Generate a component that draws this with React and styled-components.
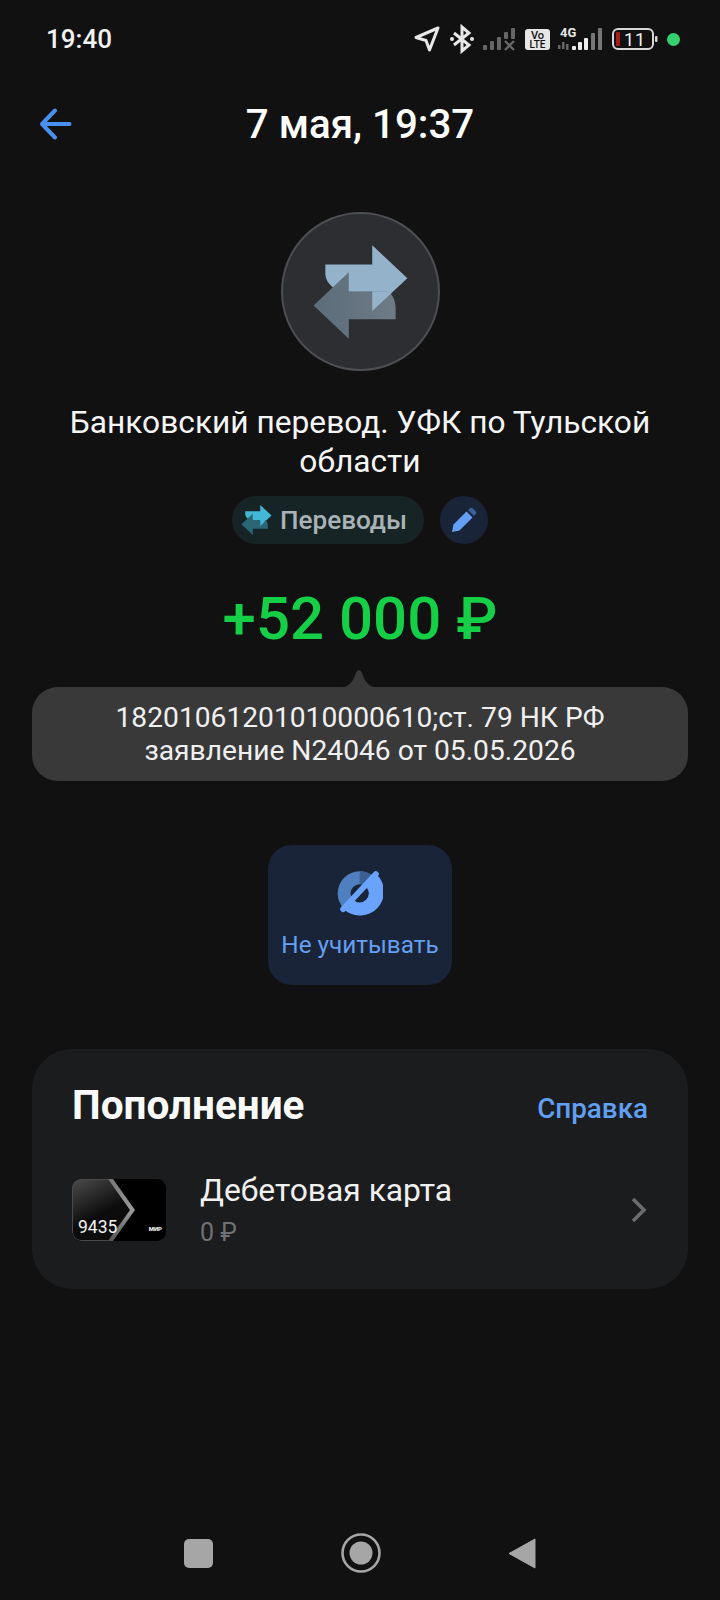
import React from 'react';
import styled, { createGlobalStyle } from 'styled-components';

const GlobalStyle = createGlobalStyle`
  html, body {
    margin: 0;
    padding: 0;
    background: #111112;
  }
  * {
    box-sizing: border-box;
  }
`;

const Page = styled.div`
  width: 720px;
  height: 1600px;
  overflow: hidden;
  display: flex;
  flex-direction: column;
  align-items: center;
  background: #111112;
  font-family: Roboto, "Liberation Sans", sans-serif;
  color: #fff;
`;

const StatusBar = styled.div`
  width: 100%;
  height: 78px;
  display: flex;
  align-items: center;
  justify-content: space-between;
  padding: 0 40px 0 46px;
`;

const Clock = styled.div`
  font-size: 26px;
  font-weight: 500;
  color: #f2f2f2;
`;

const StatusIcons = styled.div`
  display: flex;
  align-items: center;
  gap: 8px;
`;

const Dot = styled.div`
  width: 13px;
  height: 13px;
  margin-left: 1px;
  border-radius: 50%;
  background: #35d170;
`;

const Header = styled.div`
  width: 100%;
  height: 88px;
  padding-top: 4px;
  display: flex;
  align-items: center;
  justify-content: center;
  position: relative;
`;

const BackButton = styled.div`
  position: absolute;
  left: 37px;
  top: 28px;
  width: 36px;
  height: 36px;
`;

const HeaderTitle = styled.div`
  font-size: 40.300px;
  font-weight: 500;
  color: #fff;
`;

const Avatar = styled.div`
  width: 159px;
  height: 159px;
  margin-top: 46px;
  border-radius: 50%;
  background: #2c2e32;
  border: 2px solid #4c4e52;
  overflow: hidden;
`;

const Title = styled.div`
  width: 640px;
  margin-top: 32px;
  font-size: 31.700px;
  line-height: 39px;
  text-align: center;
  color: #f5f5f5;
`;

const TagRow = styled.div`
  display: flex;
  gap: 16px;
  margin-top: 15px;
`;

const Tag = styled.div`
  height: 48px;
  width: 192px;
  padding-left: 9px;
  display: flex;
  align-items: center;
  gap: 8px;
  border-radius: 24px;
  background: #172426;
  color: #a9b3b5;
  font-size: 26.100px;
  font-weight: 500;
`;

const EditButton = styled.div`
  width: 48px;
  height: 48px;
  border-radius: 50%;
  background: #1a2438;
  display: flex;
  align-items: center;
  justify-content: center;
`;

const Amount = styled.div`
  margin-top: 40px;
  font-size: 60px;
  line-height: 70px;
  font-weight: 500;
  color: #15cf46;
`;

const Tooltip = styled.div`
  position: relative;
  width: 656px;
  height: 94px;
  margin-top: 33px;
  padding: 14px 0 0;
  border-radius: 26px;
  background: #393939;
  text-align: center;
  font-size: 28.200px;
  line-height: 33px;
  color: #f0f0f0;

  &::before {
    content: '';
    position: absolute;
    left: 305px;
    top: -17px;
    width: 44px;
    height: 18px;
    background: #393939;
    clip-path: path('M0 18C10 18 14 14 17 8C19 3 20 0 22 0C24 0 25 3 27 8C30 14 34 18 44 18Z');
  }
`;

const IgnoreButton = styled.div`
  width: 184px;
  height: 140px;
  margin-top: 64px;
  padding-top: 25px;
  border-radius: 24px;
  background: #1a2438;
  display: flex;
  flex-direction: column;
  align-items: center;
  color: #659ff0;
  font-size: 24.300px;
`;

const IgnoreLabel = styled.div`
  margin-top: 14px;
`;

const Card = styled.div`
  width: 656px;
  height: 240px;
  margin-top: 64px;
  padding: 32px 40px 0;
  border-radius: 40px;
  background: #1b1c1e;
`;

const CardHead = styled.div`
  display: flex;
  align-items: center;
  justify-content: space-between;
  height: 48px;
`;

const CardTitle = styled.div`
  font-size: 40.500px;
  font-weight: 700;
  color: #fafafa;
`;

const HelpLink = styled.div`
  font-size: 27.800px;
  font-weight: 500;
  color: #619ff2;
  margin-top: 6px;
`;

const Account = styled.div`
  display: flex;
  align-items: center;
  margin-top: 42px;
`;

const CardThumb = styled.div`
  position: relative;
  width: 94px;
  height: 62px;
  border-radius: 9px;
  background: #000;
  overflow: hidden;
`;

const ThumbNumber = styled.div`
  position: absolute;
  left: 6px;
  bottom: 4px;
  font-size: 17.500px;
  color: #f2f2f2;
`;

const ThumbBrand = styled.div`
  position: absolute;
  right: 4px;
  bottom: 9px;
  font-size: 6px;
  font-weight: 900;
  color: #eee;
`;

const AccountInfo = styled.div`
  flex: 1;
  margin-left: 34px;
`;

const AccountName = styled.div`
  font-size: 31.800px;
  line-height: 38px;
  color: #f0f0f0;
`;

const AccountSum = styled.div`
  margin-top: 9px;
  font-size: 25px;
  line-height: 30px;
  color: #6f7175;
`;

const NavBar = styled.div`
  margin-top: auto;
  width: 100%;
  height: 94px;
  display: flex;
  align-items: center;
  justify-content: space-between;
  padding: 0 184px;
`;

const NavSquare = styled.div`
  width: 29px;
  height: 29px;
  border-radius: 5px;
  background: #a6a6a6;
`;

const TransferIcon = ({ light, dark, width, height }) => (
  <svg width={width} height={height} viewBox="156 133 288 287">
    <path d="M192 192H336V133L444 234L336 335V276H264L215 262C200 250 192 235 192 220Z" fill={light} />
    <path d="M264 216V276H385C400 285 408 305 408 330V360H264V420L156 318Z" fill={dark} />
    <path d="M264 276H336V335L372 301L385 276Z" fill={light} />
  </svg>
);

const AvatarIcon = () => (
  <svg width="155" height="155" viewBox="62 37 476 476">
    <defs>
      <linearGradient id="avatarDark" x1="156" y1="0" x2="408" y2="0" gradientUnits="userSpaceOnUse">
        <stop offset="0" stopColor="#5c6c79" />
        <stop offset="1" stopColor="#6e7b87" />
      </linearGradient>
    </defs>
    <path d="M192 192H336V133L444 234L336 335V276H264L215 262C200 250 192 235 192 220Z" fill="#94b2c9" />
    <path d="M264 216V276H385C400 285 408 305 408 330V360H264V420L156 318Z" fill="url(#avatarDark)" />
    <path d="M264 276H336V335L395 280L385 276Z" fill="#94b2c9" />
  </svg>
);

const IgnoreIcon = () => (
  <svg width="46" height="46" viewBox="230 106 136 136">
    <circle cx="297" cy="175" r="65" fill="#4f7fbe" />
    <path d="M297 110A65 65 0 0 1 336 123L297 175Z" fill="#3a5f92" />
    <path d="M346 118A65 65 0 0 1 250 222Z" fill="#69a3fb" />
    <circle cx="297" cy="175" r="27" fill="#1a2438" />
    <path d="M345 118L248 222" stroke="#69a3fb" strokeWidth="17" strokeLinecap="round" />
  </svg>
);

const App = () => (
  <Page>
    <GlobalStyle />
    <StatusBar>
      <Clock>19:40</Clock>
      <StatusIcons>
        <svg width="28" height="28" viewBox="0 0 28 28">
          <path d="M25 3L3 12.500L13 15.500L16.500 25Z" fill="none" stroke="#e8e8e8" strokeWidth="3" strokeLinejoin="round" />
        </svg>
        <svg width="26" height="30" viewBox="0 0 26 30">
          <path d="M5 9L20 21L13 27V3L20 9L5 21" fill="none" stroke="#e8e8e8" strokeWidth="3" />
          <circle cx="3" cy="15" r="2" fill="#e8e8e8" />
          <circle cx="23" cy="15" r="2" fill="#e8e8e8" />
        </svg>
        <svg width="34" height="24" viewBox="0 0 34 24">
          <g fill="#666">
            <rect x="0" y="18" width="4" height="5" rx="1" />
            <rect x="7" y="14" width="4" height="9" rx="1" />
            <rect x="14" y="10" width="4" height="13" rx="1" />
            <rect x="21" y="5" width="4" height="7" rx="1" />
            <rect x="28" y="1" width="4" height="11" rx="1" />
          </g>
          <path d="M22 14L31 23M31 14L22 23" stroke="#666" strokeWidth="2.400" />
        </svg>
        <svg width="25" height="21" viewBox="0 0 25 21">
          <rect width="25" height="21" rx="3" fill="#e6e6e6" />
          <text x="12.500" y="9.500" textAnchor="middle" fontSize="11" fontWeight="500" fill="#111" fontFamily="Roboto">Vo</text>
          <text x="12.500" y="19" textAnchor="middle" fontSize="10" fontWeight="500" fill="#111" fontFamily="Roboto">LTE</text>
        </svg>
        <svg width="46" height="26" viewBox="0 0 46 26">
          <text x="2" y="11" fontSize="13" fontWeight="700" fill="#e8e8e8" fontFamily="Roboto">4G</text>
          <g fill="#666">
            <rect x="0" y="19" width="2.500" height="4" />
            <rect x="4" y="16" width="2.500" height="7" />
            <rect x="8" y="18" width="2.500" height="6" />
          </g>
          <rect x="14" y="20" width="4" height="4" rx="1" fill="#eee" />
          <rect x="20" y="16" width="4" height="8" rx="1" fill="#eee" />
          <rect x="26" y="12" width="4" height="12" rx="1" fill="#eee" />
          <rect x="33" y="7" width="4" height="17" rx="1" fill="#777" />
          <rect x="40" y="2" width="4" height="22" rx="1" fill="#777" />
        </svg>
        <svg width="46" height="22" viewBox="0 0 46 22">
          <rect x="1" y="1" width="40" height="20" rx="5" fill="none" stroke="#d8d8d8" strokeWidth="2" />
          <rect x="4" y="4" width="4" height="14" rx="1" fill="#a81c1c" />
          <rect x="43" y="8" width="2.500" height="6" rx="1" fill="#d8d8d8" />
          <text x="23" y="17.500" textAnchor="middle" fontSize="18" fill="#eee" letterSpacing="1" fontFamily="Roboto">11</text>
        </svg>
        <Dot />
      </StatusIcons>
    </StatusBar>

    <Header>
      <BackButton>
        <svg width="36" height="36" viewBox="0 0 36 36">
          <path d="M32.500 18H5M18 4.500L5 18L18 31.500" fill="none" stroke="#4a90ee" strokeWidth="4" strokeLinecap="round" strokeLinejoin="round" />
        </svg>
      </BackButton>
      <HeaderTitle>7 мая, 19:37</HeaderTitle>
    </Header>

    <Avatar>
      <AvatarIcon />
    </Avatar>

    <Title>Банковский перевод. УФК по Тульской области</Title>

    <TagRow>
      <Tag>
        <TransferIcon light="#43b7d3" dark="#2b6675" width={31} height={30} />
        Переводы
      </Tag>
      <EditButton>
        <svg width="26" height="26" viewBox="0 0 26 26">
          <path d="M1 25L2.500 17.500L15.500 4.500L21.500 10.500L8.500 23.500Z" fill="#629ff5" />
          <path d="M17 3L19 1.200C19.800 .6 20.800 .6 21.500 1.200L24.800 4.500C25.400 5.200 25.400 6.200 24.800 7L23 9Z" fill="#3b6198" />
        </svg>
      </EditButton>
    </TagRow>

    <Amount>+52 000 ₽</Amount>

    <Tooltip>
      18201061201010000610;ст. 79 НК РФ
      <br />
      заявление N24046 от 05.05.2026
    </Tooltip>

    <IgnoreButton>
      <IgnoreIcon />
      <IgnoreLabel>Не учитывать</IgnoreLabel>
    </IgnoreButton>

    <Card>
      <CardHead>
        <CardTitle>Пополнение</CardTitle>
        <HelpLink>Справка</HelpLink>
      </CardHead>
      <Account>
        <CardThumb>
          <svg width="64" height="62" viewBox="0 0 64 62">
            <defs>
              <linearGradient id="thumbFill" x1="0" y1="0" x2="0.5" y2="1">
                <stop offset="0" stopColor="#4c4c4c" />
                <stop offset="0.65" stopColor="#0c0c0c" />
              </linearGradient>
              <linearGradient id="thumbEdge" x1="0" y1="0" x2="0" y2="1">
                <stop offset="0" stopColor="#777" />
                <stop offset="0.5" stopColor="#9a9a9a" />
                <stop offset="1" stopColor="#555" />
              </linearGradient>
            </defs>
            <path d="M0 0H36L60 31L36 62H0Z" fill="url(#thumbFill)" />
            <path d="M36 0H41L63 31L41 62H36L58 31Z" fill="url(#thumbEdge)" />
            <path d="M36 .5H9A8.500 8.500 0 0 0 .5 9V53A8.500 8.500 0 0 0 9 61.500H36" fill="none" stroke="#4a4a4a" />
          </svg>
          <ThumbNumber>9435</ThumbNumber>
          <ThumbBrand>МИР</ThumbBrand>
        </CardThumb>
        <AccountInfo>
          <AccountName>Дебетовая карта</AccountName>
          <AccountSum>0 ₽</AccountSum>
        </AccountInfo>
        <svg width="18" height="28" viewBox="0 0 18 28">
          <path d="M3 3L14 14L3 25" fill="none" stroke="#6b6c6f" strokeWidth="3.600" />
        </svg>
      </Account>
    </Card>

    <NavBar>
      <NavSquare />
      <svg width="40" height="40" viewBox="0 0 40 40">
        <circle cx="20" cy="20" r="18.500" fill="none" stroke="#a6a6a6" strokeWidth="2.600" />
        <circle cx="20" cy="20" r="11.500" fill="#a6a6a6" />
      </svg>
      <svg width="28" height="33" viewBox="0 0 28 33">
        <path d="M27 2V31L1 16.500Z" fill="#a6a6a6" stroke="#a6a6a6" strokeLinejoin="round" />
      </svg>
    </NavBar>
  </Page>
);

export default App;
